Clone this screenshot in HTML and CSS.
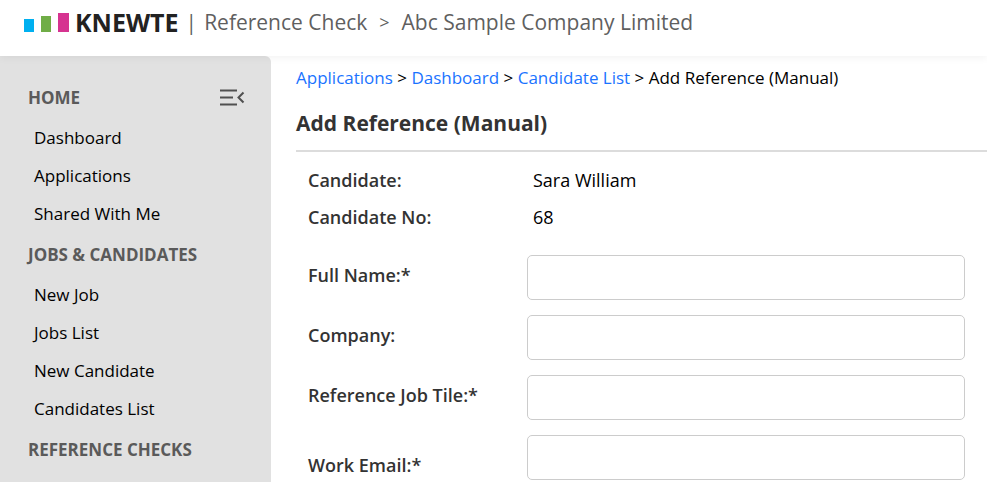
FILE: index.html
```html
<!DOCTYPE html>
<html lang="en">
<head>
  <meta charset="UTF-8">
  <meta name="viewport" content="width=device-width, initial-scale=1.0">
  <title>Add Reference (Manual)</title>
  <link rel="stylesheet" href="styles.css">
</head>
<body>
  <header class="topbar">
    <svg class="logo" width="45" height="20" viewBox="0 0 45 20" aria-hidden="true">
      <rect x="0" y="7" width="10" height="13" fill="#00b0f0"/>
      <rect x="17" y="4" width="10" height="16" fill="#70ad47"/>
      <rect x="34" y="1" width="11" height="19" fill="#d63390"/>
    </svg>
    <span class="brand">KNEWTE</span>
    <span class="divider">|</span>
    <span>Reference Check</span>
    <span class="arrow">&gt;</span>
    <span>Abc Sample Company Limited</span>
  </header>

  <div class="layout">
    <nav class="sidebar">
      <div class="group-title">
        <h2>HOME</h2>
        <button type="button" class="collapse" aria-label="Collapse menu">
          <svg width="26" height="18" viewBox="0 0 26 18" fill="none" stroke="#505050" stroke-width="2">
            <path d="M1 1.500h17M1 8.500h13M1 15.500h17M24.500 3.500L19.500 8.500l5 5"/>
          </svg>
        </button>
      </div>
      <ul>
        <li><a href="#">Dashboard</a></li>
        <li><a href="#">Applications</a></li>
        <li><a href="#">Shared With Me</a></li>
      </ul>
      <div class="group-title"><h2>JOBS &amp; CANDIDATES</h2></div>
      <ul>
        <li><a href="#">New Job</a></li>
        <li><a href="#">Jobs List</a></li>
        <li><a href="#">New Candidate</a></li>
        <li><a href="#">Candidates List</a></li>
      </ul>
      <div class="group-title"><h2>REFERENCE CHECKS</h2></div>
    </nav>

    <main class="content">
      <div class="breadcrumb">
        <a href="#">Applications</a> &gt;
        <a href="#">Dashboard</a> &gt;
        <a href="#">Candidate List</a> &gt;
        Add Reference (Manual)
      </div>
      <h1>Add Reference (Manual)</h1>

      <form class="reference-form">
        <div class="info-row">
          <span class="label">Candidate:</span>
          <span class="value">Sara William</span>
        </div>
        <div class="info-row">
          <span class="label">Candidate No:</span>
          <span class="value">68</span>
        </div>

        <div class="fields">
          <div class="field">
            <label for="fullName">Full Name:*</label>
            <input type="text" id="fullName" required>
          </div>
          <div class="field">
            <label for="company">Company:</label>
            <input type="text" id="company">
          </div>
          <div class="field">
            <label for="jobTitle">Reference Job Tile:*</label>
            <input type="text" id="jobTitle" required>
          </div>
          <div class="field field-email">
            <label for="workEmail">Work Email:*</label>
            <input type="email" id="workEmail" required>
          </div>
        </div>
      </form>
    </main>
  </div>
</body>
</html>
```

FILE: styles.css
```css
* {
  box-sizing: border-box;
}

body {
  display: flex;
  flex-direction: column;
  min-height: 100vh;
  margin: 0;
  font-family: "Segoe UI", "Open Sans", sans-serif;
  font-size: 17px;
  line-height: 24px;
  color: #000;
  background-color: #fff;
}

/* Top bar */
.topbar {
  display: flex;
  align-items: center;
  height: 56px;
  padding: 0 24px 12px;
  font-size: 21px;
  color: #5f5f5f;
  background-color: #fff;
  box-shadow: 0 2px 8px rgba(0, 0, 0, 0.05);
  z-index: 1;
  white-space: nowrap;
}

.brand {
  margin-left: 6px;
  font-weight: bold;
  font-size: 25px;
  color: #222;
}

.divider {
  margin: 0 7px;
}

.arrow {
  margin: 0 12px;
  font-size: 18px;
}

.layout {
  display: flex;
  flex: 1;
}

/* Sidebar */
.sidebar {
  flex: 0 0 271px;
  padding: 20px 26px 10px 28px;
  background-color: #e1e1e1;
  border-top-right-radius: 6px;
}

.group-title {
  display: flex;
  align-items: center;
  justify-content: space-between;
  height: 43px;
}

.group-title h2 {
  margin: 0;
  font-size: 17px;
  font-weight: bold;
  color: #5a5a5a;
}

.collapse {
  display: flex;
  padding: 0;
  border: none;
  background: none;
  cursor: pointer;
}

.sidebar ul {
  margin: 0;
  padding: 0 0 0 6px;
  list-style: none;
}

.sidebar li a {
  display: block;
  color: #000;
  line-height: 38px;
  text-decoration: none;
}

/* Content */
.content {
  flex: 1;
  padding: 10px 0 0 25px;
}

.breadcrumb a {
  color: #1a73ff;
  text-decoration: none;
}

h1 {
  margin: 16px 0 0;
  padding-bottom: 10px;
  border-bottom: 2px solid #dcdcdc;
  font-size: 21px;
  line-height: 34px;
  color: #333;
}

.reference-form {
  padding: 10px 22px 0 12px;
  font-size: 18px;
}

.info-row,
.field {
  display: grid;
  grid-template-columns: 219px 1fr;
}

.info-row {
  line-height: 37px;
}

.label,
.field label {
  font-weight: 600;
  color: #333;
}

.value {
  padding-left: 6px;
}

.fields {
  display: grid;
  gap: 15px;
  margin-top: 19px;
}

.field label {
  line-height: 40px;
}

.field input {
  width: 100%;
  height: 45px;
  padding: 0 12px;
  border: 1px solid #ccc;
  border-radius: 5px;
  font: inherit;
  background-color: #fff;
}

.field-email {
  align-items: end;
}

.field-email label {
  line-height: 30px;
}
```
